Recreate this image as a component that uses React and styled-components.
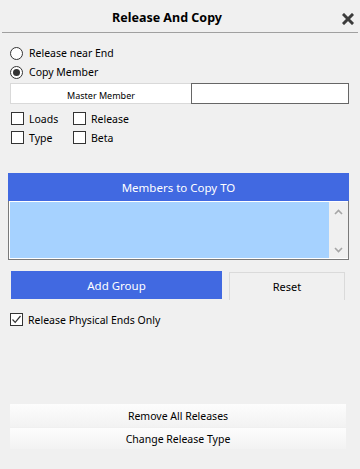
import React, { useState } from 'react'
import styled, { createGlobalStyle } from 'styled-components'

const GlobalStyle = createGlobalStyle`
  html, body {
    margin: 0;
    padding: 0;
    background: #f0f0f0;
  }
  body {
    font-family: "Noto Sans", "Open Sans", "Liberation Sans", sans-serif;
    font-size: 10.5px;
    color: #000;
  }
`

const Panel = styled.div`
  width: 360px;
  height: 469px;
  background: #f0f0f0;
  display: flex;
  flex-direction: column;
  overflow: hidden;
`

const TitleBar = styled.div`
  height: 33px;
  display: flex;
  align-items: center;
  justify-content: center;
  position: relative;
  margin: 0 2px;
  border-bottom: 1px solid #a0a0a0;
  box-sizing: border-box;
`

const Title = styled.div`
  font-weight: 700;
  font-size: 12.5px;
  margin-right: 26px;
  margin-top: 3px;
`

const CloseIcon = styled.svg`
  position: absolute;
  right: 4px;
  top: 13px;
`

const Body = styled.div`
  display: flex;
  flex-direction: column;
  padding: 11px 11px 0 8px;
`

const OptionRow = styled.label`
  display: flex;
  align-items: center;
  gap: 6px;
  height: 19px;
  padding-left: 2px;
  line-height: 1;
`

const RadioDot = styled.span`
  width: 13px;
  height: 13px;
  border: 1px solid #333;
  border-radius: 50%;
  background: #fff;
  box-sizing: border-box;
  display: flex;
  align-items: center;
  justify-content: center;
  &::after {
    content: '';
    width: 7px;
    height: 7px;
    border-radius: 50%;
    background: ${p => (p.$on ? '#333' : 'transparent')};
  }
`

const MasterRow = styled.div`
  display: flex;
  height: 21px;
  margin: 1px 0 0 2px;
`

const MasterLabel = styled.div`
  width: 181px;
  flex-shrink: 0;
  background: #fff;
  border: 1px solid #d9d9d9;
  border-right: none;
  box-sizing: border-box;
  display: flex;
  align-items: center;
  justify-content: center;
  font-size: 9px;
  padding-top: 3px;
`

const MasterInput = styled.input`
  flex: 1;
  min-width: 0;
  border: 1px solid #666;
  background: #fff;
  box-sizing: border-box;
  height: 21px;
  margin: 0;
  outline: none;
`

const CheckGrid = styled.div`
  display: grid;
  grid-template-columns: 62px 1fr;
  margin-top: 5px;
  padding-left: 3px;
`

const CheckRow = styled.label`
  display: flex;
  align-items: center;
  gap: 5px;
  height: 19px;
`

const Box = styled.span`
  width: 13px;
  height: 13px;
  flex-shrink: 0;
  border: 1px solid #333;
  background: #fff;
  box-sizing: border-box;
  display: flex;
  align-items: center;
  justify-content: center;
`

const ListHeader = styled.div`
  margin-top: 26px;
  height: 28px;
  background: #4169e1;
  color: #fff;
  font-size: 11.5px;
  display: flex;
  align-items: center;
  justify-content: center;
`

const ListBox = styled.div`
  height: 59px;
  border: 1px solid #7a7a7a;
  border-top: none;
  background: #fff;
  display: flex;
  padding: 1px 0 1px 1px;
  box-sizing: border-box;
`

const ListArea = styled.div`
  flex: 1;
  background: #a6d2ff;
`

const ScrollBar = styled.div`
  width: 19px;
  background: #f0f0f0;
  display: flex;
  flex-direction: column;
  justify-content: space-between;
  align-items: center;
  padding: 7px 0 5px;
`

const ActionRow = styled.div`
  display: flex;
  align-items: flex-start;
  margin-top: 11px;
  padding-left: 3px;
  gap: 7px;
`

const PrimaryButton = styled.button`
  width: 211px;
  height: 28px;
  border: none;
  background: #4169e1;
  color: #fff;
  font: inherit;
  font-size: 11.5px;
  padding: 0;
`

const PlainButton = styled.button`
  width: 116px;
  height: 28px;
  margin-top: 1px;
  border: 1px solid #dadada;
  border-bottom: none;
  background: #f0f0f0;
  color: #000;
  font: inherit;
  font-size: 11px;
  padding: 0;
`

const PhysicalRow = styled(CheckRow)`
  margin-top: 10px;
  padding-left: 2px;
`

const Spacer = styled.div`
  flex: 1;
`

const Footer = styled.div`
  display: flex;
  flex-direction: column;
  gap: 1px;
  padding: 0 14px 20px 10px;
`

const WideButton = styled.button`
  height: ${p => p.$h || 22}px;
  border: none;
  background: linear-gradient(#fdfdfd, #f2f2f2);
  font: inherit;
  font-size: 10.5px;
  color: #000;
  padding: 0;
`

const Check = () => (
  <svg width="11" height="11" viewBox="0 0 11 11">
    <path d="M1.5 5.5 L4.2 8.3 L9.5 2" fill="none" stroke="#333" strokeWidth="1.2" />
  </svg>
)

const Chevron = ({ up }) => (
  <svg width="9" height="6" viewBox="0 0 9 6">
    <path
      d={up ? 'M1 5 L4.5 1.5 L8 5' : 'M1 1 L4.5 4.5 L8 1'}
      fill="none"
      stroke="#a6a6a6"
      strokeWidth="1.6"
    />
  </svg>
)

export default function App() {
  const [mode, setMode] = useState('copy')
  const [master, setMaster] = useState('')

  return (
    <Panel>
      <GlobalStyle />
      <TitleBar>
        <Title>Release And Copy</Title>
        <CloseIcon width="12" height="12" viewBox="0 0 12 12">
          <path d="M2 2 L10 10 M10 2 L2 10" stroke="#3c3c3c" strokeWidth="3" strokeLinecap="square" />
        </CloseIcon>
      </TitleBar>
      <Body>
        <OptionRow onClick={() => setMode('end')}>
          <RadioDot $on={mode === 'end'} />
          Release near End
        </OptionRow>
        <OptionRow onClick={() => setMode('copy')}>
          <RadioDot $on={mode === 'copy'} />
          Copy Member
        </OptionRow>
        <MasterRow>
          <MasterLabel>Master Member</MasterLabel>
          <MasterInput value={master} onChange={e => setMaster(e.target.value)} />
        </MasterRow>
        <CheckGrid>
          <CheckRow><Box />Loads</CheckRow>
          <CheckRow><Box />Release</CheckRow>
          <CheckRow><Box />Type</CheckRow>
          <CheckRow><Box />Beta</CheckRow>
        </CheckGrid>
        <ListHeader>Members to Copy TO</ListHeader>
        <ListBox>
          <ListArea />
          <ScrollBar>
            <Chevron up />
            <Chevron />
          </ScrollBar>
        </ListBox>
        <ActionRow>
          <PrimaryButton>Add Group</PrimaryButton>
          <PlainButton>Reset</PlainButton>
        </ActionRow>
        <PhysicalRow>
          <Box><Check /></Box>
          Release Physical Ends Only
        </PhysicalRow>
      </Body>
      <Spacer />
      <Footer>
        <WideButton $h={23}>Remove All Releases</WideButton>
        <WideButton $h={21}>Change Release Type</WideButton>
      </Footer>
    </Panel>
  )
}
